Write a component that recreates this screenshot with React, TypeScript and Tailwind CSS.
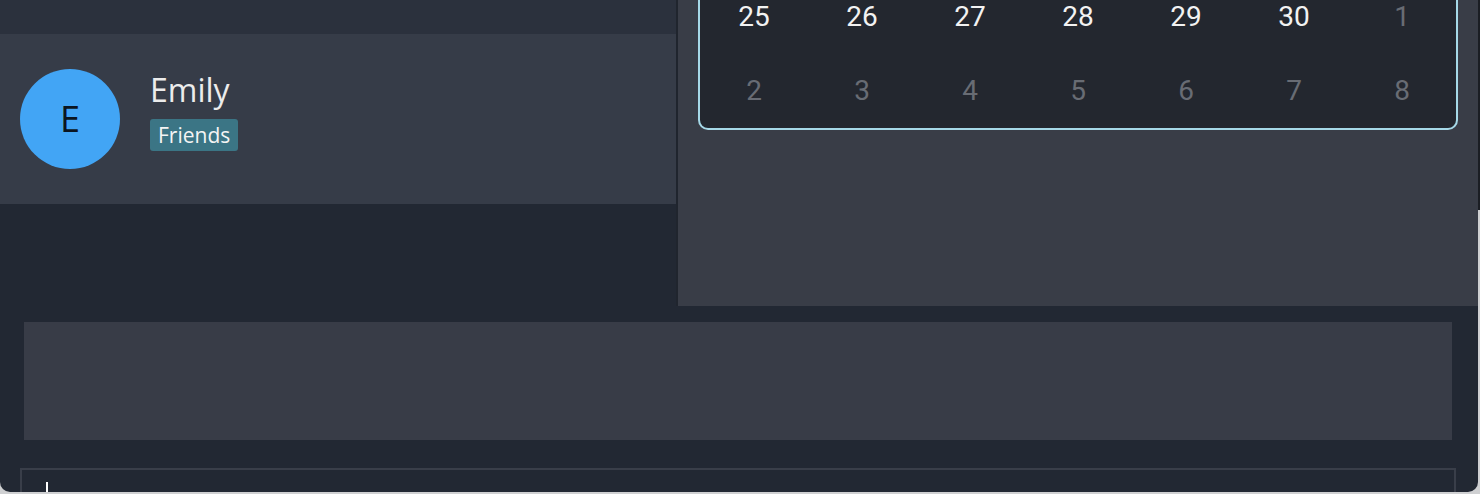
import React from "react";

const row1 = [
  { n: "25", cur: true },
  { n: "26", cur: true },
  { n: "27", cur: true },
  { n: "28", cur: true },
  { n: "29", cur: true },
  { n: "30", cur: true },
  { n: "1", cur: false },
];
const row2 = ["2", "3", "4", "5", "6", "7", "8"].map((n) => ({ n, cur: false }));

function Row({ items }: { items: { n: string; cur: boolean }[] }) {
  return (
    <div className="grid grid-cols-7 h-[74px]">
      {items.map((d, i) => (
        <div
          key={i}
          className={`flex items-center justify-center text-[28px] ${d.cur ? "text-[#f2f2f2]" : "text-[#686c74]"}`}
        >
          {d.n}
        </div>
      ))}
    </div>
  );
}

export default function App() {
  return (
    <div
      className="w-[1480px] h-[494px] overflow-hidden bg-[#cfd0d2] flex"
      style={{ fontFamily: "Roboto, 'Noto Sans', sans-serif" }}
    >
      <div className="w-[1478px] h-[492px] bg-[#222833] rounded-b-[10px] overflow-hidden flex flex-col">
        <div className="flex h-[306px] shrink-0">
          <div className="w-[676px] flex flex-col">
            <div className="h-[34px] bg-[#2b313d]" />
            <div
              className="h-[170px] bg-[#363c48] flex items-center pl-[20px]"
              style={{ fontFamily: "'Open Sans', 'Noto Sans', sans-serif" }}
            >
              <div className="w-[100px] h-[100px] rounded-full bg-[#42a5f5] flex items-center justify-center text-[36px] text-[#0b1520]">
                E
              </div>
              <div className="ml-[30px] flex flex-col items-start">
                <div className="text-[32px] leading-[40px] text-[#ececec] -mt-[18px]">Emily</div>
                <div className="mt-[9px] bg-[#3b7585] text-[#f4f4f4] text-[21px] leading-[32px] px-[8px] rounded-[3px]">
                  Friends
                </div>
              </div>
            </div>
          </div>
          <div className="w-[2px] bg-[#20252e]" />
          <div className="w-[800px] bg-[#393d47] px-[20px] overflow-hidden">
            <div className="-mt-[20px] border-2 border-t-0 border-[#a6d9e8] rounded-b-[10px] bg-[#23272f]">
              <Row items={row1} />
              <Row items={row2} />
            </div>
          </div>
        </div>
        <div className="mt-[16px] ml-[24px] mr-[26px] h-[118px] bg-[#383c47] shrink-0" />
        <div className="mt-[28px] ml-[20px] mr-[22px] flex-1 border-2 border-b-0 border-[#393e49] pl-[24px] pt-[12px]">
          <div className="w-[2px] h-[14px] bg-white" />
        </div>
      </div>
      <div className="w-[2px] flex flex-col">
        <div className="h-[210px] bg-[#1b1e24]" />
      </div>
    </div>
  );
}
